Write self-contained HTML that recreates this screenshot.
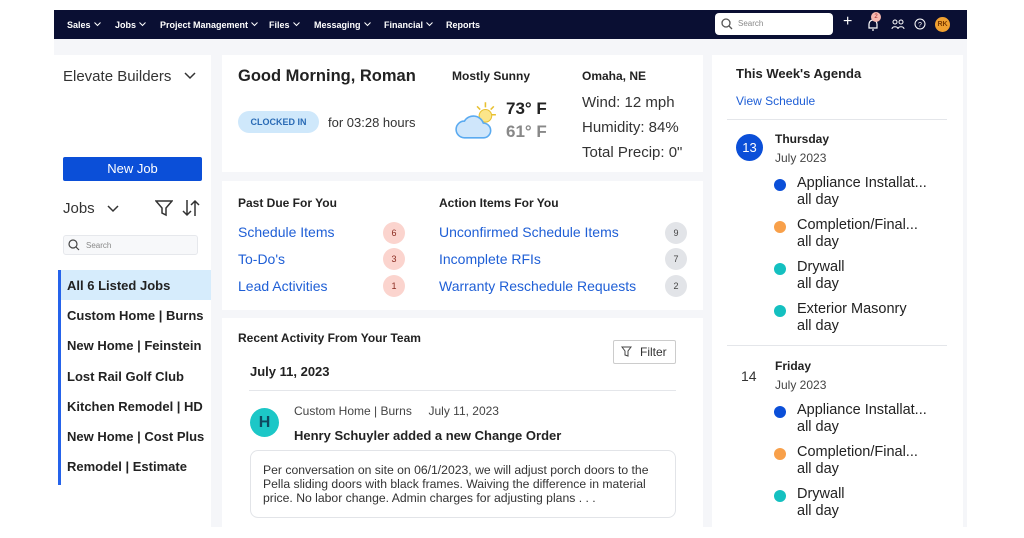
<!DOCTYPE html>
<html><head><meta charset="utf-8"><style>
*{margin:0;padding:0;box-sizing:border-box}
body{width:1024px;height:538px;background:#fff;font-family:"Liberation Sans",sans-serif;color:#222;position:relative;overflow:hidden}
.a{position:absolute;white-space:nowrap}
.nav{left:54px;top:10px;width:913px;height:29px;background:#0a0f33}
.nav span{position:absolute;top:10px;color:#fff;font-size:9px;font-weight:bold}
.nav span svg{margin-left:3px;vertical-align:1px}
.bg{left:54px;top:39px;width:913px;height:488px;background:#f5f6f9}
.w{background:#fff}
.link{color:#1f5fd6}
.badge{width:22px;height:22px;border-radius:50%;font-size:9px;text-align:center;line-height:22px}
.r{background:#fbd4ce;color:#8a2b20}
.g{background:#e2e4e8;color:#444}
.dot{width:12px;height:12px;border-radius:50%}
.ev{font-size:14.5px;color:#222;line-height:17px}
.job{left:67px;font-size:13px;font-weight:bold;color:#222}
</style></head><body>
<div class="a nav">
<span style="left:13px">Sales<svg width="7" height="5" viewBox="0 0 7 5"><path d="M.5 .5l3 3 3-3" fill="none" stroke="#fff"/></svg></span><span style="left:61px">Jobs<svg width="7" height="5" viewBox="0 0 7 5"><path d="M.5 .5l3 3 3-3" fill="none" stroke="#fff"/></svg></span><span style="left:106px">Project Management<svg width="7" height="5" viewBox="0 0 7 5"><path d="M.5 .5l3 3 3-3" fill="none" stroke="#fff"/></svg></span><span style="left:215px">Files<svg width="7" height="5" viewBox="0 0 7 5"><path d="M.5 .5l3 3 3-3" fill="none" stroke="#fff"/></svg></span><span style="left:260px">Messaging<svg width="7" height="5" viewBox="0 0 7 5"><path d="M.5 .5l3 3 3-3" fill="none" stroke="#fff"/></svg></span><span style="left:330px">Financial<svg width="7" height="5" viewBox="0 0 7 5"><path d="M.5 .5l3 3 3-3" fill="none" stroke="#fff"/></svg></span><span style="left:392px">Reports</span>
<div class="a" style="left:661px;top:3px;width:118px;height:22px;background:#fff;border-radius:4px"><svg class="a" style="left:6px;top:5px" width="12" height="12" viewBox="0 0 12 12"><circle cx="5" cy="5" r="4" fill="none" stroke="#555" stroke-width="1.3"/><path d="M8 8l3 3" stroke="#555" stroke-width="1.3"/></svg><span style="left:23px;top:6px;color:#888;font-weight:normal;font-size:8px">Search</span></div>
<span style="left:789px;top:3px;font-size:16px;font-weight:normal">+</span>
<svg class="a" style="left:813px;top:8px" width="12" height="13" viewBox="0 0 12 13"><path d="M2 10V6a4 4 0 018 0v4H2zM5 12h2" fill="none" stroke="#fff" stroke-width="1.2"/></svg>
<div class="a" style="left:817px;top:2px;width:10px;height:10px;border-radius:50%;background:#f6b8b0;color:#a02020;font-size:6px;text-align:center;line-height:10px">2</div>
<svg class="a" style="left:837px;top:9px" width="14" height="11" viewBox="0 0 14 11"><circle cx="4" cy="3" r="2" fill="none" stroke="#fff"/><circle cx="10" cy="3" r="2" fill="none" stroke="#fff"/><path d="M1 10c0-3 6-3 6 0M7 10c0-3 6-3 6 0" fill="none" stroke="#fff"/></svg>
<svg class="a" style="left:860px;top:8px" width="12" height="12" viewBox="0 0 12 12"><circle cx="6" cy="6" r="5" fill="none" stroke="#fff"/><text x="6" y="9" font-size="7" fill="#fff" text-anchor="middle" font-family="Liberation Sans">?</text></svg>
<div class="a" style="left:881px;top:7px;width:15px;height:15px;border-radius:50%;background:#f0a030;color:#7a3a00;font-size:7px;text-align:center;line-height:15px;font-weight:bold">RK</div>
</div>
<div class="a bg"></div>
<div class="a w" style="left:54px;top:55px;width:157px;height:472px"></div>
<div class="a" style="left:63px;top:68px;font-size:15px;color:#333">Elevate Builders</div>
<svg class="a" style="left:184px;top:72px" width="12" height="8" viewBox="0 0 12 8"><path d="M1 1l5 5 5-5" fill="none" stroke="#333" stroke-width="1.5"/></svg>
<div class="a" style="left:63px;top:157px;width:139px;height:24px;background:#0b4fd8;border-radius:2px;color:#fff;font-size:13px;text-align:center;line-height:24px">New Job</div>
<div class="a" style="left:63px;top:200px;font-size:15px;color:#333">Jobs</div>
<svg class="a" style="left:107px;top:205px" width="12" height="8" viewBox="0 0 12 8"><path d="M1 1l5 5 5-5" fill="none" stroke="#333" stroke-width="1.5"/></svg>
<svg class="a" style="left:155px;top:200px" width="18" height="17" viewBox="0 0 18 17"><path d="M1 1h16l-6 7v7l-4-2V8z" fill="none" stroke="#333" stroke-width="1.5"/></svg>
<svg class="a" style="left:182px;top:199px" width="18" height="18" viewBox="0 0 18 18"><path d="M5 1v15M1 12l4 4 4-4M13 17V2M9 6l4-4 4 4" fill="none" stroke="#333" stroke-width="1.5"/></svg>
<div class="a" style="left:63px;top:235px;width:135px;height:20px;border:1px solid #e6e8ec;background:#f7f8fa;border-radius:3px"></div>
<svg class="a" style="left:68px;top:239px" width="12" height="12" viewBox="0 0 12 12"><circle cx="5" cy="5" r="4" fill="none" stroke="#444" stroke-width="1.2"/><path d="M8 8l3 3" stroke="#444" stroke-width="1.2"/></svg>
<div class="a" style="left:86px;top:241px;font-size:8px;color:#888">Search</div>
<div class="a" style="left:58px;top:270px;width:3px;height:215px;background:#2563eb"></div>
<div class="a" style="left:61px;top:270px;width:150px;height:30px;background:#d6ecfc"></div>
<div class="a job" style="top:278px">All 6 Listed Jobs</div>
<div class="a job" style="top:308px">Custom Home | Burns</div>
<div class="a job" style="top:338px">New Home | Feinstein</div>
<div class="a job" style="top:369px">Lost Rail Golf Club</div>
<div class="a job" style="top:399px">Kitchen Remodel | HD</div>
<div class="a job" style="top:429px">New Home | Cost Plus</div>
<div class="a job" style="top:459px">Remodel | Estimate</div>
<div class="a w" style="left:222px;top:55px;width:481px;height:117px"></div>
<div class="a" style="left:238px;top:67px;font-size:16.5px;font-weight:bold;color:#222">Good Morning, Roman</div>
<div class="a" style="left:238px;top:111px;width:81px;height:22px;border-radius:11px;background:#cfe8fb;color:#2a6bb5;font-size:9px;text-align:center;line-height:22px;font-weight:bold">CLOCKED IN</div>
<div class="a" style="left:328px;top:115px;font-size:13px;color:#333">for 03:28 hours</div>
<div class="a" style="left:452px;top:69px;font-size:12px;font-weight:bold">Mostly Sunny</div>
<svg class="a" style="left:454px;top:100px" width="44" height="40" viewBox="0 0 42 38"><g stroke="#e8c030" stroke-width="1.5"><path d="M30 2v5M22 6l3 3M38 6l-3 3M40 14h-5"/></g><circle cx="30" cy="15" r="6" fill="#fbe58a" stroke="#e8c030"/><path d="M10 36a8 8 0 010-16a10 10 0 0118 2a7 7 0 010 14z" fill="#cfe6fb" stroke="#5aaaf0" stroke-width="1.5"/></svg>
<div class="a" style="left:506px;top:99px;font-size:17px;font-weight:bold;color:#222">73° F</div>
<div class="a" style="left:506px;top:122px;font-size:17px;font-weight:bold;color:#888">61° F</div>
<div class="a" style="left:582px;top:69px;font-size:12px;font-weight:bold">Omaha, NE</div>
<div class="a" style="left:582px;top:94px;font-size:15px;color:#333">Wind: 12 mph</div>
<div class="a" style="left:582px;top:119px;font-size:15px;color:#333">Humidity: 84%</div>
<div class="a" style="left:582px;top:144px;font-size:15px;color:#333">Total Precip: 0"</div>
<div class="a w" style="left:222px;top:181px;width:481px;height:129px"></div>
<div class="a" style="left:238px;top:196px;font-size:12px;font-weight:bold">Past Due For You</div>
<div class="a link" style="left:238px;top:224px;font-size:14px">Schedule Items</div>
<div class="a link" style="left:238px;top:251px;font-size:14px">To-Do's</div>
<div class="a link" style="left:238px;top:278px;font-size:14px">Lead Activities</div>
<div class="a badge r" style="left:383px;top:222px">6</div>
<div class="a badge r" style="left:383px;top:248px">3</div>
<div class="a badge r" style="left:383px;top:275px">1</div>
<div class="a" style="left:439px;top:196px;font-size:12px;font-weight:bold">Action Items For You</div>
<div class="a link" style="left:439px;top:224px;font-size:14px">Unconfirmed Schedule Items</div>
<div class="a link" style="left:439px;top:251px;font-size:14px">Incomplete RFIs</div>
<div class="a link" style="left:439px;top:278px;font-size:14px">Warranty Reschedule Requests</div>
<div class="a badge g" style="left:665px;top:222px">9</div>
<div class="a badge g" style="left:665px;top:248px">7</div>
<div class="a badge g" style="left:665px;top:275px">2</div>
<div class="a w" style="left:222px;top:318px;width:481px;height:209px"></div>
<div class="a" style="left:238px;top:331px;font-size:12px;font-weight:bold">Recent Activity From Your Team</div>
<div class="a" style="left:613px;top:340px;width:63px;height:24px;border:1px solid #ccc;border-radius:2px;font-size:12px;color:#333;line-height:22px;padding-left:26px">Filter</div>
<svg class="a" style="left:621px;top:346px" width="11" height="11" viewBox="0 0 11 11"><path d="M1 1h9L7 5v5L4 9V5z" fill="none" stroke="#444"/></svg>
<div class="a" style="left:250px;top:364px;font-size:13px;font-weight:bold">July 11, 2023</div>
<div class="a" style="left:249px;top:390px;width:427px;height:1px;background:#e4e6ea"></div>
<div class="a" style="left:250px;top:408px;width:29px;height:29px;border-radius:50%;background:#1cc7c7;color:#0e4a60;font-size:16px;font-weight:bold;text-align:center;line-height:29px">H</div>
<div class="a" style="left:294px;top:404px;font-size:12px;color:#444">Custom Home | Burns&nbsp;&nbsp;&nbsp;&nbsp;&nbsp;July 11, 2023</div>
<div class="a" style="left:294px;top:428px;font-size:13px;font-weight:bold">Henry Schuyler added a new Change Order</div>
<div class="a" style="left:250px;top:450px;width:426px;height:68px;border:1px solid #e2e4e8;border-radius:8px"></div>
<div class="a" style="left:263px;top:463px;font-size:12.2px;color:#333;line-height:14px">Per conversation on site on 06/1/2023, we will adjust porch doors to the<br>Pella sliding doors with black frames. Waiving the difference in material<br>price. No labor change. Admin charges for adjusting plans . . .</div>
<div class="a w" style="left:712px;top:55px;width:251px;height:472px"></div>
<div class="a" style="left:736px;top:66px;font-size:13px;font-weight:bold">This Week's Agenda</div>
<div class="a link" style="left:736px;top:94px;font-size:12px">View Schedule</div>
<div class="a" style="left:727px;top:119px;width:220px;height:1px;background:#e4e6ea"></div>
<div class="a" style="left:736px;top:134px;width:27px;height:27px;border-radius:50%;background:#0b4fd8;color:#fff;font-size:13px;text-align:center;line-height:27px">13</div>
<div class="a" style="left:775px;top:132px;font-size:12px;font-weight:bold">Thursday</div>
<div class="a" style="left:775px;top:151px;font-size:12px;color:#444">July 2023</div>
<div class="a dot" style="left:774px;top:179px;background:#0b4fd8"></div><div class="a ev" style="left:797px;top:175px">Appliance Installat...<br>all day</div>
<div class="a dot" style="left:774px;top:221px;background:#f8a04a"></div><div class="a ev" style="left:797px;top:217px">Completion/Final...<br>all day</div>
<div class="a dot" style="left:774px;top:263px;background:#14c0c0"></div><div class="a ev" style="left:797px;top:259px">Drywall<br>all day</div>
<div class="a dot" style="left:774px;top:305px;background:#14c0c0"></div><div class="a ev" style="left:797px;top:301px">Exterior Masonry<br>all day</div>
<div class="a" style="left:727px;top:345px;width:220px;height:1px;background:#e4e6ea"></div>
<div class="a" style="left:741px;top:368px;font-size:14px;color:#333">14</div>
<div class="a" style="left:775px;top:359px;font-size:12px;font-weight:bold">Friday</div>
<div class="a" style="left:775px;top:378px;font-size:12px;color:#444">July 2023</div>
<div class="a dot" style="left:774px;top:406px;background:#0b4fd8"></div><div class="a ev" style="left:797px;top:402px">Appliance Installat...<br>all day</div>
<div class="a dot" style="left:774px;top:448px;background:#f8a04a"></div><div class="a ev" style="left:797px;top:444px">Completion/Final...<br>all day</div>
<div class="a dot" style="left:774px;top:490px;background:#14c0c0"></div><div class="a ev" style="left:797px;top:486px">Drywall<br>all day</div>
</body></html>
